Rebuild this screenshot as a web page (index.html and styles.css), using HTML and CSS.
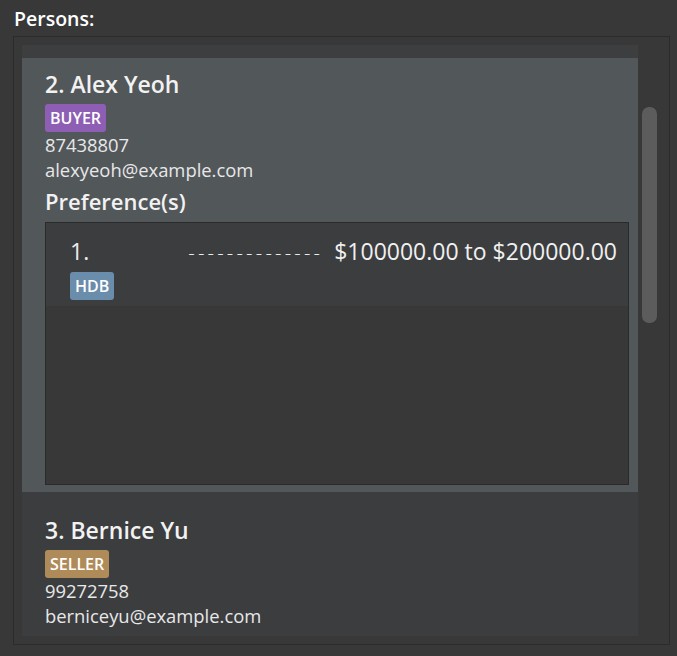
FILE: index.html
```html
<!DOCTYPE html>
<html lang="en">
<head>
<meta charset="utf-8">
<title>Persons</title>
<link rel="stylesheet" href="styles.css">
</head>
<body>
<div class="app">
  <div class="title">Persons:</div>
  <div class="panel">
    <div class="list">
      <div class="card card--prev"></div>
      <div class="card card--selected">
        <div class="name">2. Alex Yeoh</div>
        <div class="tags"><span class="tag tag--buyer">BUYER</span></div>
        <div class="field">87438807</div>
        <div class="field">alexyeoh@example.com</div>
        <div class="pref-title">Preference(s)</div>
        <div class="pref-box">
          <div class="pref-item">
            <div class="pref-row">
              <span class="pref-idx">1.</span>
              <span class="dashes">--------------</span>
              <span class="price">$100000.00 to $200000.00</span>
            </div>
            <div class="tags"><span class="tag tag--hdb">HDB</span></div>
          </div>
        </div>
      </div>
      <div class="card card--plain">
        <div class="name">3. Bernice Yu</div>
        <div class="tags"><span class="tag tag--seller">SELLER</span></div>
        <div class="field">99272758</div>
        <div class="field">berniceyu@example.com</div>
      </div>
    </div>
    <div class="scroll-track"><div class="thumb"></div></div>
  </div>
</div>
</body>
</html>
```
FILE: styles.css
```css
html, body {
  margin: 0;
  padding: 0;
  background: #383838;
}
body {
  font-family: "Open Sans", "Noto Sans", sans-serif;
  color: #ececec;
}
.app {
  padding-top: 7px;
}
.title {
  font-size: 19.5px;
  line-height: 24px;
  font-weight: 600;
  color: #ffffff;
  padding-left: 14px;
  margin-bottom: 5px;
}
.panel {
  box-sizing: border-box;
  margin-left: 13px;
  width: 657px;
  height: 609px;
  border: 1px solid #2b2b2b;
  padding: 8px 0 8px 8px;
  display: flex;
}
.list {
  width: 616px;
  height: 591px;
  overflow: hidden;
  display: flex;
  flex-direction: column;
  flex-shrink: 0;
}
.card {
  box-sizing: border-box;
  flex-shrink: 0;
  padding-left: 23px;
}
.card--prev {
  height: 13px;
  background: #3c3e40;
}
.card--selected {
  height: 434px;
  background: #52575a;
  padding: 12px 9px 7px 23px;
}
.card--plain {
  height: 160px;
  background: #3c3d3f;
  padding-top: 24px;
}
.name {
  font-size: 23px;
  line-height: 28px;
  font-weight: 600;
  color: #f2f2f2;
}
.tags {
  display: flex;
  margin-top: 6px;
}
.tag {
  display: inline-block;
  height: 28px;
  line-height: 28px;
  padding: 0 5px;
  border-radius: 3px;
  font-size: 16px;
  font-weight: 600;
  color: #ffffff;
}
.tag--buyer { background: #8e5eb5; }
.tag--seller { background: #b08b5a; }
.tag--hdb { background: #6a8dab; }
.field {
  font-size: 18.4px;
  line-height: 25px;
  color: #e8e8e8;
}
.pref-title {
  font-size: 22px;
  line-height: 28px;
  font-weight: 600;
  margin-top: 5px;
  color: #f2f2f2;
}
.pref-box {
  box-sizing: border-box;
  margin-top: 7px;
  height: 263px;
  border: 1px solid #2a2a2a;
  background: #383838;
}
.pref-item {
  box-sizing: border-box;
  height: 83px;
  background: #3c3d3f;
  padding: 15px 11px 0 24px;
}
.pref-row {
  display: flex;
  align-items: baseline;
  font-size: 23px;
  line-height: 26px;
}
.dashes {
  margin-left: auto;
  font-size: 20px;
  font-weight: 300;
  letter-spacing: 3.2px;
  margin-right: 11px;
}
.price {
  color: #f0f0f0;
}
.scroll-track {
  flex: 1;
  padding: 62px 0 0 4px;
}
.thumb {
  width: 15px;
  height: 216px;
  border-radius: 7px;
  background: #5c5c5c;
}
```
